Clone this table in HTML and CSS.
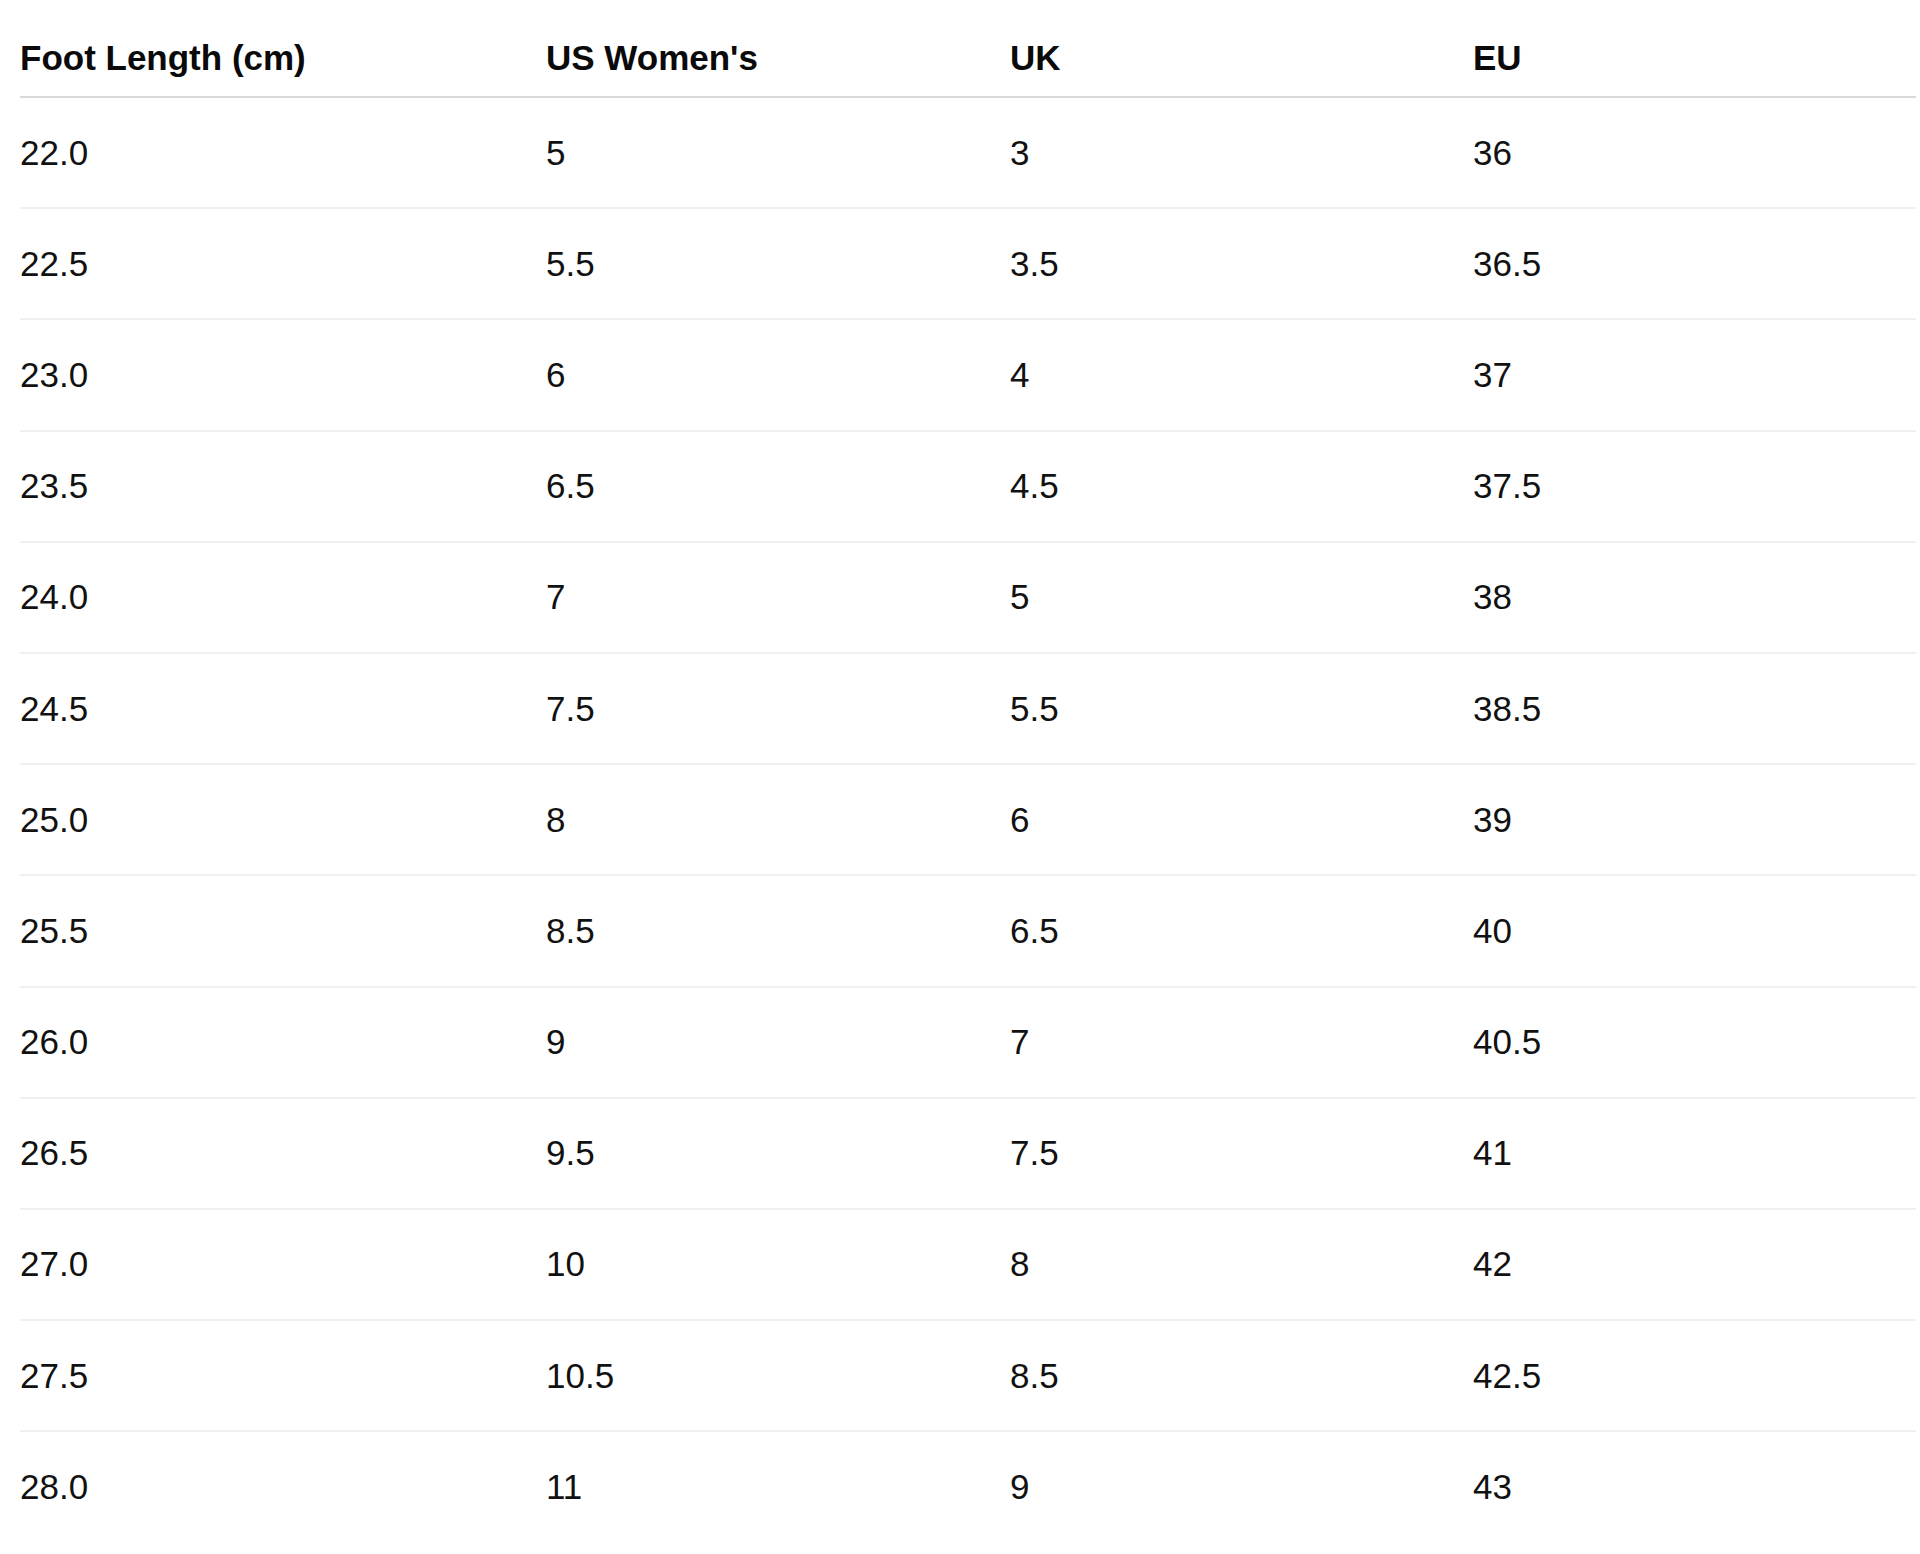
FILE: index.html
```html
<!DOCTYPE html>
<html lang="en">
<head>
<meta charset="utf-8">
<title>Size Chart</title>
<link rel="stylesheet" href="styles.css">
</head>
<body>
<div class="page">
  <table class="size-table">
    <colgroup>
      <col class="c1"><col class="c2"><col class="c3"><col class="c4">
    </colgroup>
    <thead>
      <tr><th>Foot Length (cm)</th><th>US Women's</th><th>UK</th><th>EU</th></tr>
    </thead>
    <tbody>
      <tr><td>22.0</td><td>5</td><td>3</td><td>36</td></tr>
      <tr><td>22.5</td><td>5.5</td><td>3.5</td><td>36.5</td></tr>
      <tr><td>23.0</td><td>6</td><td>4</td><td>37</td></tr>
      <tr><td>23.5</td><td>6.5</td><td>4.5</td><td>37.5</td></tr>
      <tr><td>24.0</td><td>7</td><td>5</td><td>38</td></tr>
      <tr><td>24.5</td><td>7.5</td><td>5.5</td><td>38.5</td></tr>
      <tr><td>25.0</td><td>8</td><td>6</td><td>39</td></tr>
      <tr><td>25.5</td><td>8.5</td><td>6.5</td><td>40</td></tr>
      <tr><td>26.0</td><td>9</td><td>7</td><td>40.5</td></tr>
      <tr><td>26.5</td><td>9.5</td><td>7.5</td><td>41</td></tr>
      <tr><td>27.0</td><td>10</td><td>8</td><td>42</td></tr>
      <tr><td>27.5</td><td>10.5</td><td>8.5</td><td>42.5</td></tr>
      <tr><td>28.0</td><td>11</td><td>9</td><td>43</td></tr>
    </tbody>
  </table>
</div>
</body>
</html>
```

FILE: styles.css
```css
html, body {
  margin: 0;
  background: #ffffff;
}
.page {
  padding: 0 4px 0 20px;
  font-family: "Liberation Sans", Arial, sans-serif;
  color: #111111;
}
.size-table {
  width: 100%;
  border-collapse: collapse;
  table-layout: fixed;
  font-size: 35px;
  line-height: 40px;
}
.c1 { width: 526px; }
.c2 { width: 464px; }
.c3 { width: 463px; }
.c4 { width: auto; }
.size-table th {
  text-align: left;
  font-weight: 700;
  color: #0a0a0a;
  padding: 38px 0 18px 0;
  border-bottom: 2px solid #d9d9d9;
}
.size-table td {
  padding: 34.6px 0;
  border-bottom: 2px solid #f0f0f0;
}
.size-table tbody tr:last-child td {
  border-bottom: none;
}
```
